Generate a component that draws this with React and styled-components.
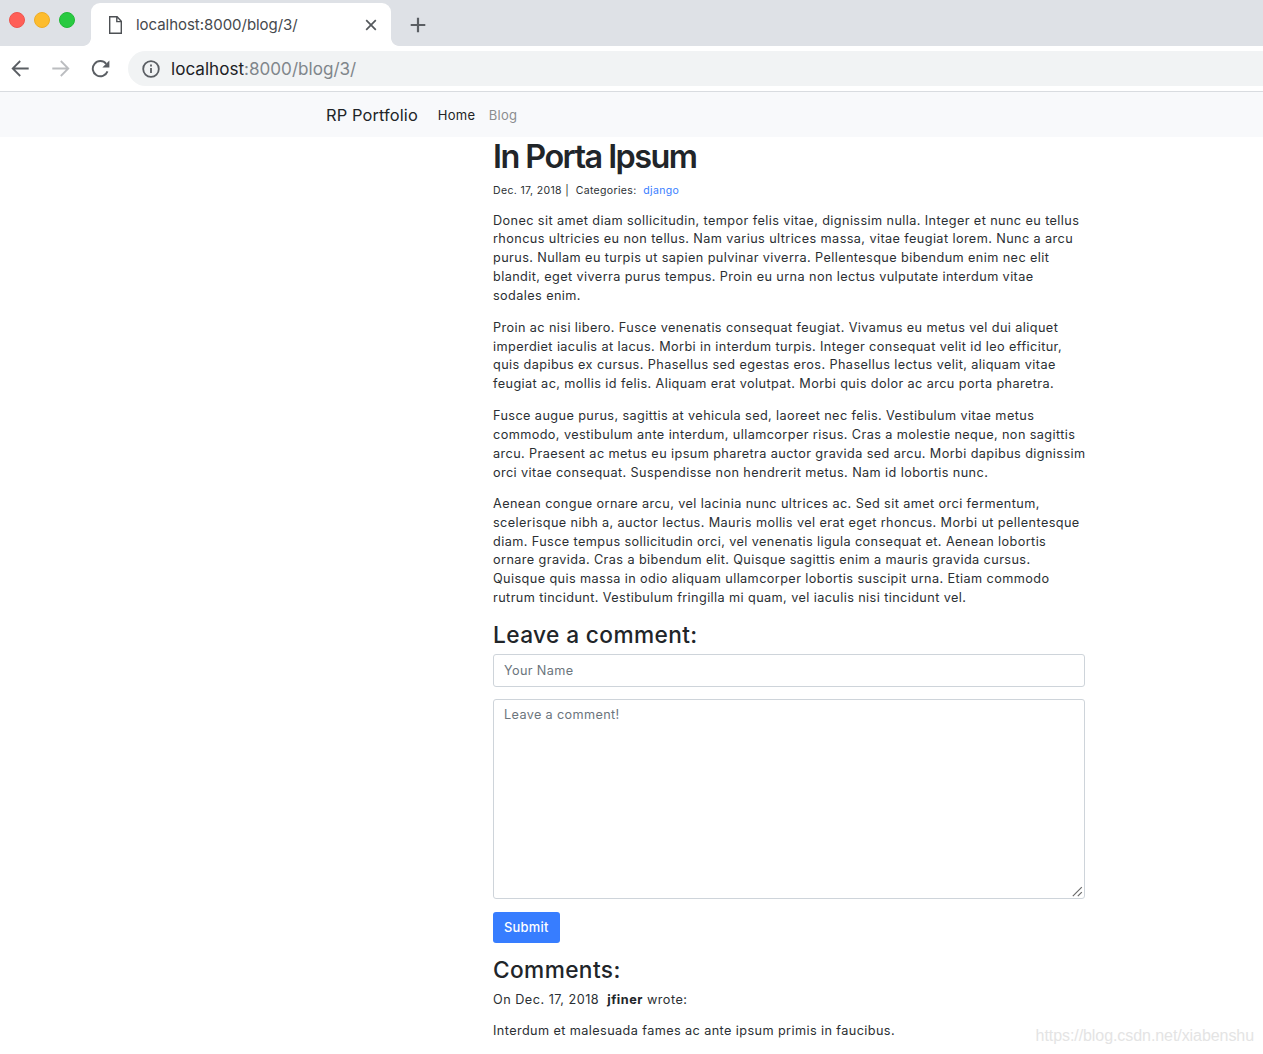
import React from 'react'
import styled, { createGlobalStyle } from 'styled-components'

const GlobalStyle = createGlobalStyle`
    * { box-sizing: border-box; }
    body {
        margin: 0;
        background: #fff;
        color: #212529;
        font-family: Inter, "Liberation Sans", sans-serif;
        font-size: 12.7px;
        line-height: 18.75px;
        overflow: hidden;
    }
    h1, h3, p { margin: 0; }
`

const Screen = styled.div`
    position: relative;
    height: 1054px;
    overflow: hidden;
`

/* ---- browser window ---- */

const TabStrip = styled.div`
    display: flex;
    align-items: flex-end;
    height: 46px;
    background: #dee1e6;
`

const Lights = styled.div`
    display: flex;
    gap: 9px;
    width: 83px;
    height: 46px;
    padding: 12px 0 0 9px;
`

const Light = styled.span`
    width: 16px;
    height: 16px;
    border-radius: 50%;
    background: ${({ color }) => color};
    border: 1px solid ${({ $edge }) => $edge};
`

const Flare = styled.span`
    width: 8px;
    height: 8px;
    background: radial-gradient(circle at ${({ $side }) => $side} top, transparent 7.5px, #fff 8.2px);
`

const Tab = styled.div`
    display: flex;
    align-items: center;
    width: 300px;
    height: 43px;
    padding: 0 14px 0 18px;
    border-radius: 9px 9px 0 0;
    background: #fff;
`

const TabTitle = styled.span`
    flex: 1;
    margin-left: 14px;
    padding-top: 2px;
    color: #45494d;
    font-size: 15px;
    letter-spacing: -0.04px;
`

const NewTab = styled.div`
    display: flex;
    align-items: center;
    height: 43px;
    margin-left: 11px;
`

const Toolbar = styled.div`
    display: flex;
    align-items: center;
    height: 46px;
    padding-left: 11px;
    border-bottom: 1px solid #d9dce0;
    background: #fff;
`

const ToolIcon = styled.svg`
    flex: none;
    margin-right: ${({ $gap }) => $gap}px;
`

const AddressBar = styled.div`
    display: flex;
    align-items: center;
    flex: 1;
    height: 35px;
    padding-left: 14px;
    border-radius: 18px 0 0 18px;
    background: #f1f3f4;
`

const Url = styled.span`
    margin-left: 11px;
    padding-top: 1px;
    color: #80868b;
    font-size: 17.1px;
    letter-spacing: 0;

    b {
        color: #202124;
        font-weight: 400;
    }
`

/* ---- page ---- */

const Navbar = styled.nav`
    display: flex;
    align-items: center;
    height: 45px;
    padding: 2px 0 0 326px;
    background: #f8f9fb;
`

const Brand = styled.a`
    margin-right: 20px;
    color: #212427;
    font-size: 16.4px;
    letter-spacing: 0.12px;
`

const NavLink = styled.a`
    margin-right: 13.5px;
    color: ${({ $active }) => ($active ? '#222426' : '#8b8d8f')};
    font-size: 13px;
    letter-spacing: 0.25px;
`

const Article = styled.main`
    width: 592px;
    margin-left: 493px;
`

const Title = styled.h1`
    height: 41px;
    font-size: 32.4px;
    font-weight: 560;
    line-height: 40px;
    letter-spacing: -1.55px;
    white-space: nowrap;
`

const Meta = styled.small`
    display: block;
    height: 33.5px;
    padding-top: 4px;
    color: #2b2f33;
    font-size: 10.5px;
    letter-spacing: 0.35px;
    white-space: pre;

    a { color: #377dff; }
`

const Paragraph = styled.p`
    margin-bottom: ${({ $gap }) => $gap}px;
    color: #2b2f33;
    letter-spacing: ${({ $spacing = 0.4 }) => $spacing}px;
    white-space: pre;

    b { color: #212529; }
`

const Heading = styled.h3`
    height: 38px;
    font-size: 22.7px;
    font-weight: 500;
    line-height: 37px;
    letter-spacing: 0.38px;
`

const field = `
    display: block;
    width: 592px;
    padding: 5px 10px;
    border: 1px solid #ced4da;
    border-radius: 3px;
    outline: 0;
    background: #fff;
    color: #495057;
    font: 400 12.7px/19px Inter, "Liberation Sans", sans-serif;
    letter-spacing: 0.35px;

    &::placeholder { color: #6c757d; opacity: 1; }
`

const NameInput = styled.input`
    ${field}
    height: 33px;
    margin-bottom: 12px;
`

const CommentBox = styled.div`
    position: relative;
    margin-bottom: 13px;
`

const CommentInput = styled.textarea`
    ${field}
    height: 200px;
    resize: none;
`

const Grip = styled.svg`
    position: absolute;
    right: 2px;
    bottom: 2px;
`

const Submit = styled.button`
    display: block;
    width: 66.5px;
    height: 31px;
    margin-bottom: 8px;
    padding: 0;
    border: 0;
    border-radius: 3px;
    background: #377dff;
    color: #fff;
    font: 500 12.9px/31px Inter, "Liberation Sans", sans-serif;
    letter-spacing: 0.25px;
`

const Comment = styled.div`
    padding-top: 2px;
`

const Watermark = styled.div`
    position: absolute;
    right: 9px;
    bottom: 9px;
    color: #e4e4e4;
    font: 16px/18px "Liberation Sans", Arial, sans-serif;
    letter-spacing: -0.07px;
`

const body = [
    { gap: 13.5, text: `Donec sit amet diam sollicitudin, tempor felis vitae, dignissim nulla. Integer et nunc eu tellus
rhoncus ultricies eu non tellus. Nam varius ultrices massa, vitae feugiat lorem. Nunc a arcu
purus. Nullam eu turpis ut sapien pulvinar viverra. Pellentesque bibendum enim nec elit
blandit, eget viverra purus tempus. Proin eu urna non lectus vulputate interdum vitae
sodales enim.` },
    { gap: 13.5, text: `Proin ac nisi libero. Fusce venenatis consequat feugiat. Vivamus eu metus vel dui aliquet
imperdiet iaculis at lacus. Morbi in interdum turpis. Integer consequat velit id leo efficitur,
quis dapibus ex cursus. Phasellus sed egestas eros. Phasellus lectus velit, aliquam vitae
feugiat ac, mollis id felis. Aliquam erat volutpat. Morbi quis dolor ac arcu porta pharetra.` },
    { gap: 12.75, text: `Fusce augue purus, sagittis at vehicula sed, laoreet nec felis. Vestibulum vitae metus
commodo, vestibulum ante interdum, ullamcorper risus. Cras a molestie neque, non sagittis
arcu. Praesent ac metus eu ipsum pharetra auctor gravida sed arcu. Morbi dapibus dignissim
orci vitae consequat. Suspendisse non hendrerit metus. Nam id lobortis nunc.` },
    { gap: 8.25, text: `Aenean congue ornare arcu, vel lacinia nunc ultrices ac. Sed sit amet orci fermentum,
scelerisque nibh a, auctor lectus. Mauris mollis vel erat eget rhoncus. Morbi ut pellentesque
diam. Fusce tempus sollicitudin orci, vel venenatis ligula consequat et. Aenean lobortis
ornare gravida. Cras a bibendum elit. Quisque sagittis enim a mauris gravida cursus.
Quisque quis massa in odio aliquam ullamcorper lobortis suscipit urna. Etiam commodo
rutrum tincidunt. Vestibulum fringilla mi quam, vel iaculis nisi tincidunt vel.` },
]

const Browser = () => (
    <>
        <TabStrip>
            <Lights>
                <Light color='#ff5f57' $edge='#ee554e' />
                <Light color='#fdbc2e' $edge='#eeac24' />
                <Light color='#28ca41' $edge='#20b936' />
            </Lights>
            <Flare $side='left' />
            <Tab>
                <svg width='13' height='18' viewBox='0 0 13 18' fill='none' stroke='#4d5054' strokeWidth='1.4'>
                    <path d='M.7.8h7.4l4.2 4.5v11.9H.7zM7.8 1v4.6h4.4' />
                </svg>
                <TabTitle>localhost:8000/blog/3/</TabTitle>
                <svg width='12' height='12' viewBox='0 0 12 12' stroke='#54585c' strokeWidth='1.7'>
                    <path d='M1.2 1.2l9.6 9.6M10.8 1.2l-9.6 9.6' />
                </svg>
            </Tab>
            <Flare $side='right' />
            <NewTab>
                <svg width='16' height='16' viewBox='0 0 16 16' stroke='#5a5e63' strokeWidth='2.2'>
                    <path d='M8 .7v14.6M.7 8h14.6' />
                </svg>
            </NewTab>
        </TabStrip>
        <Toolbar>
            <ToolIcon $gap={23} width='18' height='18' viewBox='0 0 18 18' fill='none' stroke='#5a5e63' strokeWidth='1.8'>
                <path d='M17.7 8.5H2M9.2 1L1.7 8.5l7.5 7.5' />
            </ToolIcon>
            <ToolIcon $gap={21} width='18' height='18' viewBox='0 0 18 18' fill='none' stroke='#bbbdc0' strokeWidth='1.8'>
                <path d='M.3 8.5H16M8.8 1l7.5 7.5-7.5 7.5' />
            </ToolIcon>
            <ToolIcon $gap={17} width='20' height='18' viewBox='0 0 20 18' fill='none' stroke='#5a5e63' strokeWidth='1.9'>
                <path d='M16.5 11.3A7.6 7.6 0 1 1 15.2 3.8' />
                <path d='M18.4 .6v7h-7z' fill='#5a5e63' stroke='none' />
            </ToolIcon>
            <AddressBar>
                <svg width='18' height='18' viewBox='0 0 18 18' fill='none' stroke='#5a5e63' strokeWidth='1.8'>
                    <circle cx='9' cy='9' r='7.8' />
                    <path d='M9 8v5M9 4.6v1.9' />
                </svg>
                <Url><b>localhost</b>:8000/blog/3/</Url>
            </AddressBar>
        </Toolbar>
    </>
)

const App = () => (
    <Screen>
        <GlobalStyle />
        <Browser />
        <Navbar>
            <Brand>RP Portfolio</Brand>
            <NavLink $active>Home</NavLink>
            <NavLink>Blog</NavLink>
        </Navbar>
        <Article>
            <Title>In Porta Ipsum</Title>
            <Meta>Dec. 17, 2018 |  Categories:  <a>django</a></Meta>
            {body.map(({ gap, text }, i) => <Paragraph key={i} $gap={gap}>{text}</Paragraph>)}
            <Heading>Leave a comment:</Heading>
            <NameInput placeholder='Your Name' />
            <CommentBox>
                <CommentInput placeholder='Leave a comment!' />
                <Grip width='11' height='11' viewBox='0 0 11 11' stroke='#6a6a6a' strokeWidth='1.2'>
                    <path d='M.8 10.2L9.8 1.2M5.8 10.2l4-4' />
                </Grip>
            </CommentBox>
            <Submit>Submit</Submit>
            <Heading>Comments:</Heading>
            <Comment>
                <Paragraph $gap={12.5} $spacing={0.48}>On Dec. 17, 2018  <b>jfiner</b> wrote:</Paragraph>
                <Paragraph>Interdum et malesuada fames ac ante ipsum primis in faucibus.</Paragraph>
            </Comment>
        </Article>
        <Watermark>https://blog.csdn.net/xiabenshu</Watermark>
    </Screen>
)

export default App
